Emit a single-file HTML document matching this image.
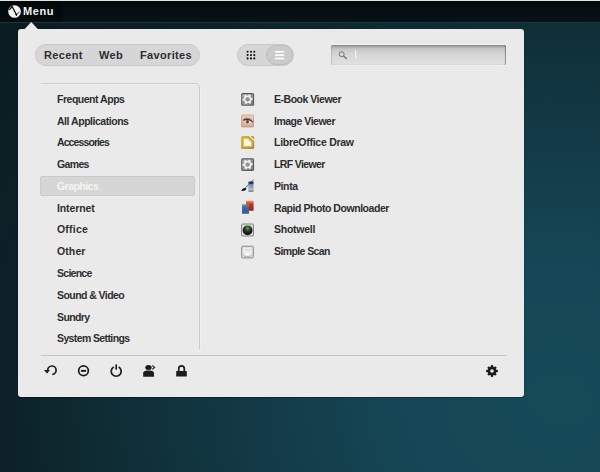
<!DOCTYPE html>
<html><head><meta charset="utf-8">
<style>
*{margin:0;padding:0;box-sizing:border-box}
html,body{width:600px;height:472px;overflow:hidden}
body{position:relative;font-family:"Liberation Sans",sans-serif;
background:radial-gradient(ellipse 560px 480px at 560px 400px,#164a57 0%,#164655 30%,#11343e 68%,#0c2228 98%,#0a1c21 125%);}
.a{position:absolute}
#panel{left:0;top:0;width:600px;height:23px;background:linear-gradient(#030a0c,#071318);border-top:1px solid #dfe3e3}
#panel:after{content:"";position:absolute;left:0;right:0;top:21px;height:1px;background:#1f353b}
#mbtn{left:0;top:0;width:63px;height:21px;background:linear-gradient(#02080a,#040c0f)}
#mtxt{left:23px;top:5px;color:#f2f2ee;font-weight:bold;font-size:11px;line-height:13px;letter-spacing:0.6px}
#popup{left:18px;top:29px;width:506px;height:368px;background:#eaeaea;border-radius:3px;box-shadow:0 0 1px rgba(0,0,0,.55),0 1px 1px rgba(0,0,0,.3)}
#tabs{left:35px;top:44px;width:165px;height:22px;border-radius:11px;background:#d6d6d6;border:1px solid #c9c9c9}
.tab{top:48px;color:#2e2e2e;font-weight:bold;font-size:11px;line-height:14px;letter-spacing:0.35px}
#vt{left:237px;top:44px;width:57px;height:22px;border-radius:11px;background:#d6d6d6;border:1px solid #c9c9c9}
#vtsel{left:266px;top:45px;width:27px;height:20px;border-radius:10px;background:#cbcbcb;border:1px solid #bdbdbd}
#search{left:331px;top:45px;width:175px;height:20px;border-radius:2px;background:linear-gradient(#858585 0,#a9a9a9 1.5px,#c6c6c6 4px,#d6d6d6 9px,#e2e2e2 100%);box-shadow:inset -1px 0 1px rgba(0,0,0,.35),inset 1px 0 1px rgba(0,0,0,.12),0 -1px 0 #f6f6f6,0 1px 0 #f2f2f2}
#lpanel{left:41px;top:83px;width:159px;height:266px;border-top:1px solid #cbcbcb;border-right:1px solid #c9c9c9;border-top-right-radius:5px;box-shadow:1px 0 0 #f0f0f0,inset -1px 0 0 #efefef,inset 0 1px 0 #efefef}
#hl{left:40px;top:176px;width:155px;height:20px;border-radius:2px;background:#d6d6d6;border:1px solid #cacaca}
.cat{left:57px;color:#2e2e2e;font-weight:bold;font-size:10.5px;line-height:12px;letter-spacing:-0.4px;white-space:nowrap}
.cat.sel{color:#f3f7ee}
.app{left:274px;color:#2e2e2e;font-weight:bold;font-size:10.5px;line-height:12px;letter-spacing:-0.4px;white-space:nowrap}
</style></head><body>
<div id="panel" class="a"><div id="mbtn" class="a"></div></div>
<svg class="a" style="left:7px;top:4px" width="15" height="15" viewBox="0 0 15 15">
<circle cx="7.55" cy="7.5" r="6.35" fill="#f2f2f0"/>
<path d="M2.4 5.9 L5.1 2.5 L7.4 6.9 L8.4 8.7 L9.5 11.6" fill="none" stroke="#0d0d0d" stroke-width="1.25" stroke-linejoin="round"/>
<path d="M8.6 9.6 L10.6 9.9 L12.3 7.7" fill="none" stroke="#333" stroke-width=".9"/>
<path d="M8.4 9.8 L10.4 10.2 L9.8 12.2 Z" fill="#0d0d0d"/>
</svg>
<div id="mtxt" class="a">Menu</div>
<div id="popup" class="a"></div>
<svg class="a" style="left:18px;top:20px" width="30" height="12"><polygon points="6.2,9.5 13.25,2 20.2,9.5 20.2,11 6.2,11" fill="#eaeaea"/></svg>
<!-- tabs -->
<div class="a" id="tabs"></div>
<div class="a tab" style="left:44px">Recent</div>
<div class="a tab" style="left:99px">Web</div>
<div class="a tab" style="left:140px">Favorites</div>
<!-- view toggle -->
<div class="a" id="vt"></div>
<div class="a" id="vtsel"></div>
<svg class="a" style="left:237px;top:44px" width="57" height="22">
<g fill="#161616"><circle cx="10.6" cy="7.7" r="1.05"/><circle cx="14.0" cy="7.7" r="1.05"/><circle cx="17.3" cy="7.7" r="1.05"/><circle cx="10.6" cy="11.1" r="1.05"/><circle cx="14.0" cy="11.1" r="1.05"/><circle cx="17.3" cy="11.1" r="1.05"/><circle cx="10.6" cy="14.4" r="1.05"/><circle cx="14.0" cy="14.4" r="1.05"/><circle cx="17.3" cy="14.4" r="1.05"/></g>
<g fill="#fff">
<rect x="38" y="7" width="9.2" height="1.6"/><rect x="38" y="10.4" width="9.2" height="1.6"/><rect x="38" y="13.7" width="9.2" height="1.6"/>
</g>
</svg>
<!-- search -->
<div class="a" id="search"></div>
<svg class="a" style="left:331px;top:45px" width="30" height="20">
<circle cx="10.7" cy="9.2" r="2.5" fill="none" stroke="#747474" stroke-width="1"/>
<path d="M12.5 11 L15.8 14" stroke="#747474" stroke-width="1.3"/>
<rect x="24.2" y="5" width="1" height="9" fill="#f7f7f7"/>
</svg>
<!-- left panel -->
<div class="a" id="lpanel"></div>
<div class="a" id="hl"></div>
<div class="a cat" style="top:93px;letter-spacing:-0.483px">Frequent Apps</div>
<div class="a cat" style="top:115px;letter-spacing:-0.467px">All Applications</div>
<div class="a cat" style="top:136px;letter-spacing:-0.900px">Accessories</div>
<div class="a cat" style="top:158px;letter-spacing:-0.650px">Games</div>
<div class="a cat sel" style="top:180px;letter-spacing:-0.543px">Graphics</div>
<div class="a cat" style="top:202px;letter-spacing:-0.114px">Internet</div>
<div class="a cat" style="top:223px;letter-spacing:0.200px">Office</div>
<div class="a cat" style="top:245px;letter-spacing:0.100px">Other</div>
<div class="a cat" style="top:267px;letter-spacing:-0.733px">Science</div>
<div class="a cat" style="top:289px;letter-spacing:-0.567px">Sound &amp; Video</div>
<div class="a cat" style="top:311px;letter-spacing:-0.600px">Sundry</div>
<div class="a cat" style="top:332px;letter-spacing:-0.614px">System Settings</div>
<!-- apps -->
<div class="a app" style="top:93px;letter-spacing:-0.483px">E-Book Viewer</div>
<div class="a app" style="top:115px;letter-spacing:-0.491px">Image Viewer</div>
<div class="a app" style="top:136px;letter-spacing:-0.267px">LibreOffice Draw</div>
<div class="a app" style="top:158px;letter-spacing:-0.622px">LRF Viewer</div>
<div class="a app" style="top:180px;letter-spacing:-0.400px">Pinta</div>
<div class="a app" style="top:202px;letter-spacing:-0.448px">Rapid Photo Downloader</div>
<div class="a app" style="top:223px;letter-spacing:-0.257px">Shotwell</div>
<div class="a app" style="top:245px;letter-spacing:-0.600px">Simple Scan</div>
<!-- app icons -->
<svg class="a" style="left:240px;top:91px" width="16" height="170" viewBox="0 0 16 170">
<defs>
<linearGradient id="gg" x1="0" y1="0" x2="1" y2="1"><stop offset="0" stop-color="#a8a8a8"/><stop offset="1" stop-color="#7a7a7a"/></linearGradient>
<linearGradient id="pk" x1="0" y1="0" x2="0" y2="1"><stop offset="0" stop-color="#f0d3c4"/><stop offset="1" stop-color="#d9a78f"/></linearGradient>
<linearGradient id="gd" x1="0" y1="0" x2="1" y2="1"><stop offset="0" stop-color="#d9b24a"/><stop offset="1" stop-color="#b08420"/></linearGradient>
<radialGradient id="sw" cx=".5" cy=".3" r=".75"><stop offset="0" stop-color="#6a9a5a"/><stop offset=".28" stop-color="#355a30"/><stop offset=".55" stop-color="#1c221c"/><stop offset="1" stop-color="#141216"/></radialGradient>
<linearGradient id="rd" x1="0" y1="0" x2="0" y2="1"><stop offset="0" stop-color="#e59a55"/><stop offset=".35" stop-color="#c9321c"/><stop offset="1" stop-color="#b01a12"/></linearGradient>
<linearGradient id="bl" x1="0" y1="0" x2="0" y2="1"><stop offset="0" stop-color="#7a9a70"/><stop offset=".3" stop-color="#3d6ea8"/><stop offset="1" stop-color="#2c5a98"/></linearGradient>
<linearGradient id="bt" x1="0" y1="0" x2="0" y2="1"><stop offset="0" stop-color="#2c3440"/><stop offset=".3" stop-color="#6a8fb0"/><stop offset=".65" stop-color="#9ab0c0"/><stop offset="1" stop-color="#8a8a8a"/></linearGradient>
<g id="gear">
<rect x="1.2" y="2" width="12.9" height="12.8" rx="1.6" fill="#555"/>
<rect x="2.1" y="2.9" width="11.1" height="11" rx=".8" fill="url(#gg)"/>
<g transform="translate(7.6 8.3)" fill="#f0f0f0">
<circle r="3.7"/>
<rect x="-1.1" y="-5" width="2.2" height="10" transform="rotate(25)"/>
<rect x="-1.1" y="-5" width="2.2" height="10" transform="rotate(85)"/>
<rect x="-1.1" y="-5" width="2.2" height="10" transform="rotate(145)"/>
</g>
<circle cx="7.6" cy="8.3" r="2.1" fill="#7e7e7e"/>
<circle cx="7.6" cy="8.3" r="1.2" fill="#9a9a9a"/>
</g>
</defs>
<use href="#gear"/>
<!-- image viewer -->
<g transform="translate(0 21.75)">
<rect x="1.2" y="1.8" width="12.8" height="12.8" rx="1.2" fill="url(#pk)"/>
<rect x="1.7" y="2.3" width="11.8" height="11.8" rx=".8" fill="none" stroke="#b88a76" stroke-width="1" opacity=".55"/>
<path d="M4 8.2 C6 7 9.6 7.4 12 9.6 C9.6 11.4 6 11.2 4 8.2Z" fill="#f4eeee"/>
<circle cx="7.4" cy="9" r="1.7" fill="#5e4c54"/>
<path d="M3.3 7.6 C5.8 5.8 9.8 6.4 12.8 9.4" stroke="#3e3430" stroke-width="1.3" fill="none"/>
<path d="M4.2 5.6 C6.5 5 9 5.4 11.5 7" stroke="#6a5a50" stroke-width=".7" fill="none"/>
</g>
<!-- libreoffice draw -->
<g transform="translate(0 43.5)">
<path d="M2.6 1.5 H9 L14.2 6.7 V13 a1.5 1.5 0 0 1 -1.5 1.5 H2.6 A1.5 1.5 0 0 1 1.1 13 V3 A1.5 1.5 0 0 1 2.6 1.5Z" fill="url(#gd)"/>
<path d="M10.4 1.5 H12.7 A1.5 1.5 0 0 1 14.2 3 V5.3Z" fill="#c49a34"/>
<path d="M3.3 3.7 H8.3 L12 7.4 V12.3 H3.3Z" fill="none" stroke="#ecd27a" stroke-width=".8"/>
<path d="M4 4.4 H8 L11.3 7.7 V11.6 H4Z" fill="#fcf8e2"/>
<path d="M9 1.4 L14.3 6.7" stroke="#f3e296" stroke-width="1"/>
</g>
<!-- lrf -->
<use href="#gear" transform="translate(0 65.25)"/>
<!-- pinta -->
<g transform="translate(0 87)">
<path d="M13.6 1.6 L5.5 9.8" stroke="#555" stroke-width="1"/>
<path d="M1.3 13 C2 11 3.6 9.6 6.2 10.2 C6.6 11.8 5 13.2 1.3 13Z" fill="#161616"/>
<rect x="8.4" y="3.4" width="5.2" height="10.6" rx=".8" fill="url(#bt)"/>
<rect x="8.9" y="4" width="4.2" height="1.8" fill="#2a3038"/>
<rect x="8.6" y="11" width="4.8" height="1" fill="#c8c8c8"/>
</g>
<!-- rapid photo -->
<g transform="translate(0 109.75)">
<rect x="6" y="0" width="7.6" height="10" fill="url(#rd)"/>
<rect x="2" y="3.6" width="7" height="9.4" fill="url(#bl)"/>
</g>
<!-- shotwell -->
<g transform="translate(0 130.5)">
<rect x="1" y="2" width="13" height="13" rx="1" fill="#d7d7d7"/>
<rect x="1.5" y="2.5" width="12" height="12" rx="1" fill="none" stroke="#8a8a8a" stroke-width="1"/>
<circle cx="7.6" cy="8.8" r="4.9" fill="url(#sw)"/>
</g>
<!-- simple scan -->
<g transform="translate(0 152.75)">
<rect x="1.2" y="2" width="12.6" height="12.6" rx="1.2" fill="#e2e2e2"/>
<rect x="1.7" y="2.5" width="11.6" height="11.6" rx=".9" fill="none" stroke="#8a8a8a" stroke-width="1"/>
<rect x="3.4" y="4" width="8.2" height="8.8" rx="1" fill="#ececec"/>
<path d="M3.6 10.8 V11.6 Q3.6 12.6 4.6 12.6 H10.4 Q11.4 12.6 11.4 11.6 V10.8" fill="none" stroke="#a8a8a8" stroke-width=".8"/>
<rect x="5.9" y="9.6" width="3.6" height="1.3" rx=".6" fill="#ffffff"/>
<rect x="5" y="5.9" width="5" height=".7" fill="#c6c6c6"/>
</g>
</svg>
<!-- bottom icons -->
<svg class="a" style="left:40px;top:360px" width="470" height="22" viewBox="0 0 470 22">
<g fill="none" stroke="#1c1c1c" stroke-width="1.7">
<path d="M7.7 10.2 A4.2 4.2 0 1 1 12.3 14.4"/>
<circle cx="43.5" cy="10.8" r="4.85"/>
<path d="M73.7 6.9 A5 5 0 1 0 78.7 6.9"/>
<path d="M76.2 5.05 V8.95" stroke-linecap="round"/>
<path d="M112.2 5.4 L114.6 7.4 L112.2 9.4" stroke-width="1.2"/>
</g>
<g fill="#1c1c1c">
<path d="M4 10 L10 10 L7 13.6Z"/>
<rect x="40.9" y="9.9" width="5.2" height="1.9"/>
<ellipse cx="108.5" cy="7.6" rx="3.2" ry="2.5"/>
<path d="M103.2 16.8 V13.2 C103.2 11.2 105 10.4 107 10.4 H110 C112 10.4 114 11.2 114 13.2 V16.8Z"/>
<rect x="136.2" y="11" width="10.6" height="5.6" rx=".6"/>
<path d="M137.9 11 V8.6 A3.6 3.6 0 0 1 145.1 8.6 V11 H143.4 V8.6 A1.9 1.9 0 0 0 139.6 8.6 V11Z"/>
<g transform="translate(452 11)">
<circle r="4.5"/>
<rect x="-1.1" y="-5.9" width="2.2" height="11.8"/>
<rect x="-1.1" y="-5.6" width="2.2" height="11.2" transform="rotate(45)"/>
<rect x="-1.1" y="-5.9" width="2.2" height="11.8" transform="rotate(90)"/>
<rect x="-1.1" y="-5.6" width="2.2" height="11.2" transform="rotate(135)"/>
</g>
</g>
<circle cx="452" cy="11" r="1.8" fill="#e9e9e9"/>
</svg>
<!-- separator -->
<div class="a" style="left:41px;top:355px;width:465px;height:1px;background:#c4c4c4"></div>
</body></html>
